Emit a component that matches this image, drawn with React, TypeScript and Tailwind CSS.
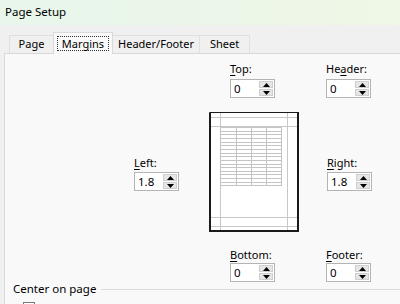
import React from "react";

const font = { fontFamily: '"Noto Sans", "Segoe UI", Arial, sans-serif' };

function Label({ pre = "", u, post }: { pre?: string; u: string; post: string }) {
  return (
    <div className="h-[16px] text-[11px] leading-[16px] text-black">
      {pre}
      <span className="underline underline-offset-[2px]">{u}</span>
      {post}
    </div>
  );
}

function Spinner({ value }: { value: string }) {
  return (
    <div className="flex h-[19px] w-[45px] border border-[#b4b4b4] bg-white">
      <div className="flex-1 pl-[3px] text-[11.5px] leading-[17px] text-black">{value}</div>
      <div className="my-[1px] mr-[1px] flex w-[14px] flex-col gap-[1px]">
        <div className="flex flex-1 items-center justify-center border border-[#cfcfcf] bg-[#e6e6e6]">
          <svg width="7" height="4" viewBox="0 0 7 4">
            <path d="M0 4 L3.5 0 L7 4 Z" fill="#000" />
          </svg>
        </div>
        <div className="flex flex-1 items-center justify-center border border-[#cfcfcf] bg-[#e6e6e6]">
          <svg width="7" height="4" viewBox="0 0 7 4">
            <path d="M0 0 L3.5 4 L7 0 Z" fill="#000" />
          </svg>
        </div>
      </div>
    </div>
  );
}

function Preview() {
  const rows = Array.from({ length: 16 }, (_, i) => 126 + i * 3.65);
  return (
    <svg width="91" height="121" viewBox="208 111 91 121" className="block">
      <rect x="208" y="111" width="90" height="120" fill="#ffffff" />
      <line x1="208" y1="116.5" x2="298" y2="116.5" stroke="#c8c8c8" />
      <line x1="208" y1="125.5" x2="298" y2="125.5" stroke="#c8c8c8" />
      <line x1="208" y1="216.5" x2="298" y2="216.5" stroke="#c8c8c8" />
      <line x1="208" y1="225.5" x2="298" y2="225.5" stroke="#c8c8c8" />
      <line x1="219.5" y1="111" x2="219.5" y2="231" stroke="#c8c8c8" />
      <line x1="286.5" y1="111" x2="286.5" y2="231" stroke="#c8c8c8" />
      {rows.map((y, i) => (
        <line key={i} x1="219.5" y1={Math.round(y) + 0.5} x2="280.5" y2={Math.round(y) + 0.5} stroke="#c4c4c4" />
      ))}
      <line x1="219.5" y1="184.5" x2="280.5" y2="184.5" stroke="#c4c4c4" />
      {[219.5, 235.5, 250.5, 265.5, 280.5].map((x, i) => (
        <line key={i} x1={x} y1="126" x2={x} y2="185" stroke="#c4c4c4" />
      ))}
      <path d="M208.5 231 V111.5 H297" fill="none" stroke="#1a1a1a" strokeWidth="1" />
      <path d="M208 230 H297 V111" fill="none" stroke="#1a1a1a" strokeWidth="2" />
      <line x1="209.5" y1="112" x2="209.5" y2="230" stroke="#1a1a1a" strokeWidth="1" />
    </svg>
  );
}

export default function App() {
  return (
    <div className="h-[304px] w-[400px] overflow-hidden bg-[#f0f0f0]" style={font}>
      <div className="h-[25px] bg-gradient-to-r from-[#e8f6ec] to-[#eff7e6] pl-[5px] text-[11.5px] leading-[24px] text-black">
        Page Setup
      </div>
      <div className="flex h-[28px] items-end pl-[9px] text-[11px] text-black">
        <div className="flex h-[18px] w-[44px] items-center justify-center border-t border-l border-[#e0e0e0] pb-[1px]">
          Page
        </div>
        <div className="relative z-10 -mb-[1px] flex h-[22px] w-[60px] items-center justify-center border border-b-0 border-[#d9d9d9] bg-[#f9f9f9]">
          <span className="border border-dotted border-[#333] px-[4px] leading-[13px]">Margins</span>
        </div>
        <div className="flex h-[18px] w-[87px] items-center justify-center border-t border-r border-[#e0e0e0] pb-[1px]">
          Header/Footer
        </div>
        <div className="flex h-[18px] w-[50px] items-center justify-center border-t border-r border-[#e0e0e0] pb-[1px]">
          Sheet
        </div>
      </div>
      <div className="ml-[4px] h-[260px] border-t border-l border-[#d9d9d9] bg-[#f9f9f9] text-[11px] text-black">
        <div className="flex pt-[7px]">
          <div className="ml-[225px] flex flex-col gap-[2px]">
            <Label u="T" post="op:" />
            <Spinner value="0" />
          </div>
          <div className="ml-[51px] flex flex-col gap-[2px]">
            <Label pre="He" u="a" post="der:" />
            <Spinner value="0" />
          </div>
        </div>
        <div className="mt-[14px] flex">
          <div className="ml-[129px] mt-[43px] flex flex-col gap-[1px]">
            <Label u="L" post="eft:" />
            <Spinner value="1.8" />
          </div>
          <div className="ml-[30px]">
            <Preview />
          </div>
          <div className="ml-[27px] mt-[43px] flex flex-col gap-[1px]">
            <Label u="R" post="ight:" />
            <Spinner value="1.8" />
          </div>
        </div>
        <div className="mt-[14px] flex">
          <div className="ml-[225px] flex flex-col">
            <Label u="B" post="ottom:" />
            <Spinner value="0" />
          </div>
          <div className="ml-[51px] flex flex-col">
            <Label u="F" post="ooter:" />
            <Spinner value="0" />
          </div>
        </div>
        <div className="-mt-[1px] flex items-center">
          <span className="ml-[8px] text-[11.5px] leading-[16px]">Center on page</span>
          <div className="ml-[5px] mt-[1px] h-px flex-1 bg-[#dcdcdc]" />
        </div>
        <div className="ml-[18px] mt-[5px] h-[12px] w-[12px] border border-[#7a7a7a] bg-white" />
      </div>
    </div>
  );
}
